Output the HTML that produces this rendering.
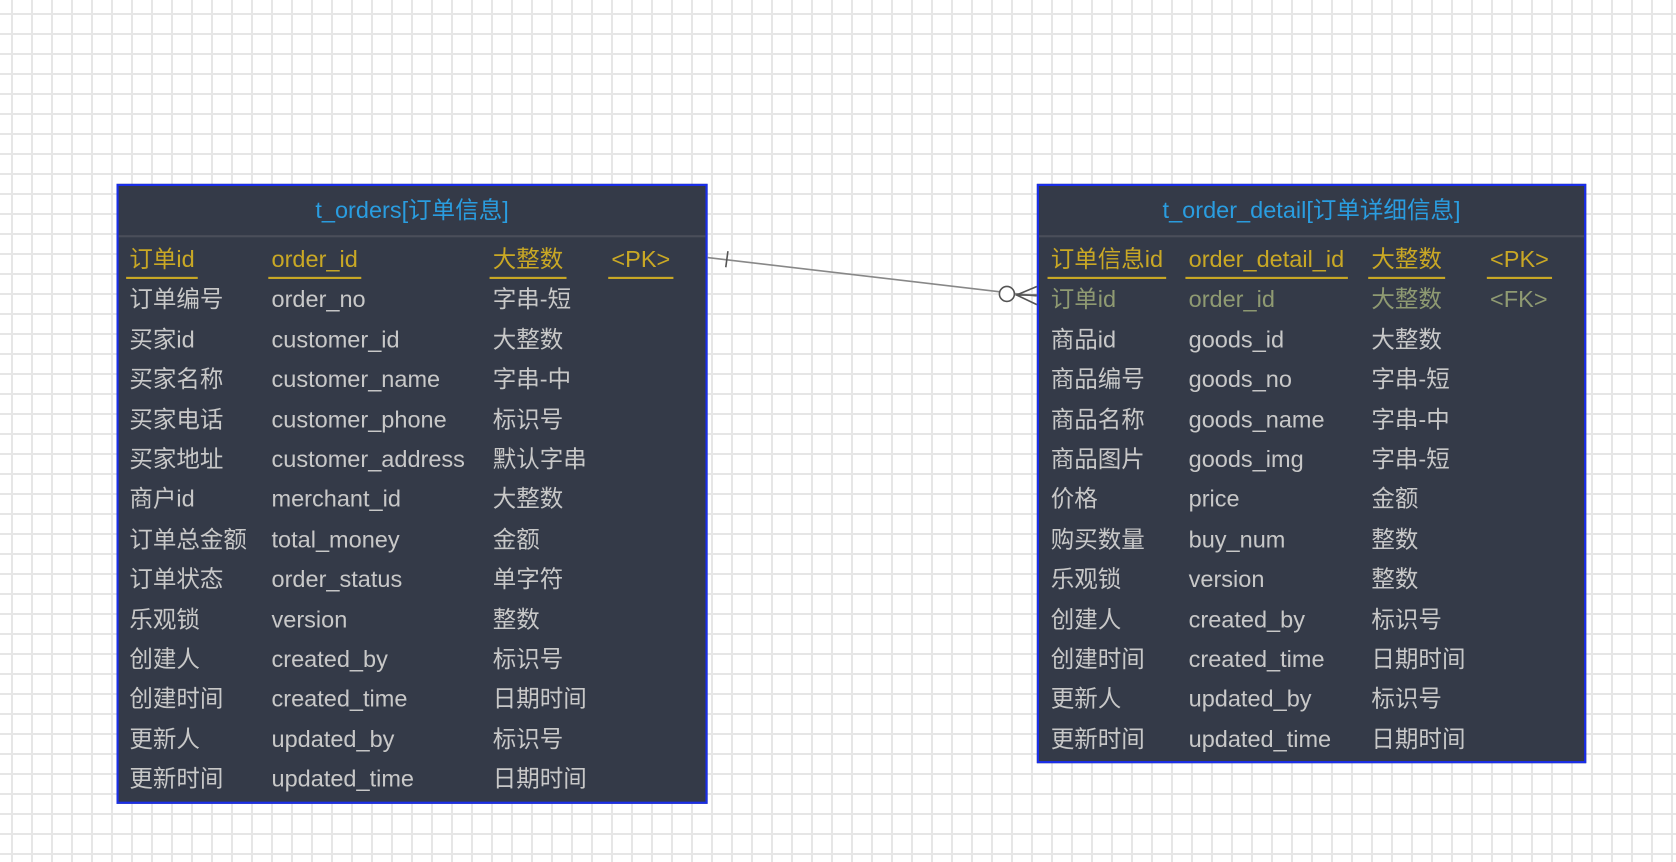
<!DOCTYPE html>
<html><head><meta charset="utf-8"><style>
body{margin:0;width:1676px;height:862px;overflow:hidden;background-color:#fff;
background-image:linear-gradient(90deg,#e6e6e6 2px,transparent 2px),linear-gradient(#e6e6e6 2px,transparent 2px);
background-size:20px 20px;background-position:11px 13px;font-family:"Liberation Sans","Noto Sans CJK SC",sans-serif;}
#w{position:absolute;left:0;top:0;width:1568px;height:806px;transform:scale(1.0689);transform-origin:0 0}
.t{position:absolute;background:#343a48;border:2px solid #1a2ee8;box-sizing:border-box;}
.h{height:46px;border-bottom:2px solid #4a4e5a;color:#2a9de0;font-size:22px;text-align:center;line-height:46px;}
.r{position:absolute;font-size:22px;color:#c8c8c8;white-space:nowrap;line-height:24px;}
.pk{color:#c9a825;border-bottom:2px solid #c9a825;padding-bottom:4px}
.fk{color:#8f9a72}
</style></head><body>
<div id="w">
<div class="t" style="left:109px;top:172px;width:553px;height:580px"><div class="h">t_orders[订单信息]</div></div>
<div class="t" style="left:970px;top:172px;width:514px;height:542px"><div class="h">t_order_detail[订单详细信息]</div></div>
<svg style="position:absolute;left:0;top:0" width="1568" height="806">
<line x1="662" y1="241" x2="970" y2="277" stroke="#888" stroke-width="1.5"/>
<line x1="681" y1="235" x2="679" y2="250" stroke="#555" stroke-width="1.5"/>
<circle cx="942" cy="275" r="7" fill="#fff" stroke="#555" stroke-width="1.5"/>
<path d="M970 268 L951 276 L970 285 M951 276 L970 276" fill="none" stroke="#555" stroke-width="1.5"/>
</svg>
<div id="a"></div>
</div>
<script>
function T(x,cols,rows,special){let h='';rows.forEach((r,i)=>{const y=231+i*37.4;r.forEach((c,j)=>{if(!c)return;let cl='r';if(i==0)cl+=' pk';else if(special&&i==1)cl+=' fk';h+=`<div class="${cl}" style="left:${cols[j]-(i==0?3:0)}px;top:${y}px;${i==0?'padding-left:3px;padding-right:3px':''}">${c}</div>`;});});return h;}
document.getElementById('a').innerHTML=T(0,[121,254,461,572],[
['订单id','order_id','大整数','&lt;PK&gt;'],['订单编号','order_no','字串-短'],['买家id','customer_id','大整数'],['买家名称','customer_name','字串-中'],['买家电话','customer_phone','标识号'],['买家地址','customer_address','默认字串'],['商户id','merchant_id','大整数'],['订单总金额','total_money','金额'],['订单状态','order_status','单字符'],['乐观锁','version','整数'],['创建人','created_by','标识号'],['创建时间','created_time','日期时间'],['更新人','updated_by','标识号'],['更新时间','updated_time','日期时间']])+
T(0,[983,1112,1283,1394],[
['订单信息id','order_detail_id','大整数','&lt;PK&gt;'],['订单id','order_id','大整数','&lt;FK&gt;'],['商品id','goods_id','大整数'],['商品编号','goods_no','字串-短'],['商品名称','goods_name','字串-中'],['商品图片','goods_img','字串-短'],['价格','price','金额'],['购买数量','buy_num','整数'],['乐观锁','version','整数'],['创建人','created_by','标识号'],['创建时间','created_time','日期时间'],['更新人','updated_by','标识号'],['更新时间','updated_time','日期时间']],true);
</script>
</body></html>
